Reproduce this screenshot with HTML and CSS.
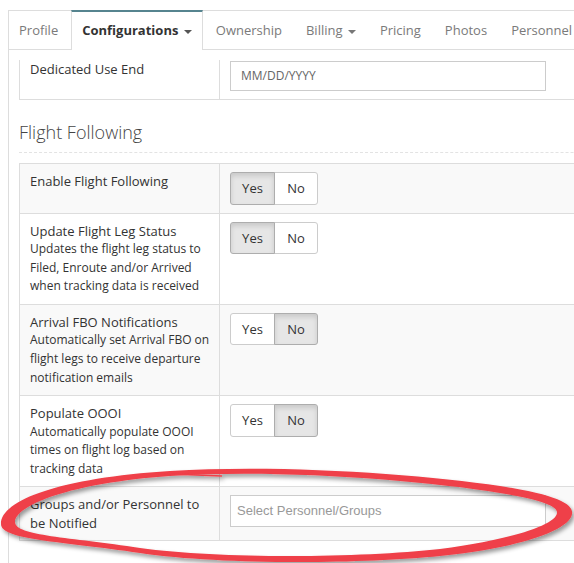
FILE: index.html
```html
<!DOCTYPE html>
<html>
<head>
<meta charset="utf-8">
<link rel="stylesheet" href="styles.css">
</head>
<body>
<div class="panel">
  <ul class="tabs">
    <li class="tab">Profile</li>
    <li class="tab active">Configurations <span class="caret"></span></li>
    <li class="tab">Ownership</li>
    <li class="tab">Billing <span class="caret"></span></li>
    <li class="tab">Pricing</li>
    <li class="tab">Photos</li>
    <li class="tab">Personnel</li>
    <li class="tab">Documents</li>
  </ul>
  <div class="content">
    <div class="ftable cut">
      <div class="frow">
        <div class="lbl">Dedicated Use End</div>
        <div class="val"><div class="field date">MM/DD/YYYY</div></div>
      </div>
    </div>

    <h3 class="section">Flight Following</h3>

    <div class="ftable">
      <div class="frow striped">
        <div class="lbl"><div class="title">Enable Flight Following</div></div>
        <div class="val">
          <div class="btn-group"><span class="btn yes on">Yes</span><span class="btn no">No</span></div>
        </div>
      </div>
      <div class="frow">
        <div class="lbl">
          <div class="title">Update Flight Leg Status</div>
          <div class="desc">Updates the flight leg status to<br>Filed, Enroute and/or Arrived<br>when tracking data is received</div>
        </div>
        <div class="val">
          <div class="btn-group"><span class="btn yes on">Yes</span><span class="btn no">No</span></div>
        </div>
      </div>
      <div class="frow striped">
        <div class="lbl">
          <div class="title">Arrival FBO Notifications</div>
          <div class="desc">Automatically set Arrival FBO on<br>flight legs to receive departure<br>notification emails</div>
        </div>
        <div class="val">
          <div class="btn-group"><span class="btn yes">Yes</span><span class="btn no on">No</span></div>
        </div>
      </div>
      <div class="frow">
        <div class="lbl">
          <div class="title">Populate OOOI</div>
          <div class="desc">Automatically populate OOOI<br>times on flight log based on<br>tracking data</div>
        </div>
        <div class="val">
          <div class="btn-group"><span class="btn yes">Yes</span><span class="btn no on">No</span></div>
        </div>
      </div>
      <div class="frow striped">
        <div class="lbl"><div class="title">Groups and/or Personnel to<br>be Notified</div></div>
        <div class="val"><div class="field select">Select Personnel/Groups</div></div>
      </div>
    </div>
  </div>
</div>

<svg class="annot" width="574" height="563" viewBox="0 0 574 563" xmlns="http://www.w3.org/2000/svg">
  <defs>
    <filter id="sh" x="-5%" y="-20%" width="110%" height="140%">
      <feDropShadow dx="2" dy="3" stdDeviation="2" flood-color="#000" flood-opacity="0.4"/>
    </filter>
  </defs>
  <g filter="url(#sh)">
    <path fill="#ef3f48" fill-rule="evenodd" d="M 1 524 C 1 500 60 478 170 471 C 280 464 420 474 500 486 C 560 495 574 505 572 514 C 570 530 520 548 440 556 C 360 564 220 565 140 553 C 60 541 1 540 1 524 Z M 15 522 C 16 505 70 483 170 476 C 280 469 420 480 500 493 C 545 500 558 507 557 513 C 556 525 510 540 440 549 C 360 558 220 559 140 548 C 70 537 15 536 15 522 Z"/>
    <path d="M 158 473.5 L 222 476" stroke="#ef3f48" stroke-width="1.5" fill="none"/>
  </g>
</svg>
</body>
</html>
```

FILE: styles.css
```css
html, body {
  overflow: hidden;
}
body {
  margin: 10px 0 0 8px;
  background: #fff;
  font-family: "Open Sans", "DejaVu Sans", sans-serif;
  font-size: 13px;
  line-height: 1.42857;
  color: #333;
}
.panel {
  width: 720px;
  min-height: 620px;
  border-left: 1px solid #ddd;
  border-top: 1px solid #ddd;
}
.tabs {
  list-style: none;
  margin: 0 0 0 -1px;
  padding: 0;
  display: flex;
  align-items: flex-start;
  border-bottom: 1px solid #ddd;
  white-space: nowrap;
}
.tab {
  box-sizing: border-box;
  height: 38px;
  line-height: 37px;
  padding: 0 10px;
  margin-right: 2px;
  border: 1px solid transparent;
  border-bottom: 0;
  color: #7a7a7a;
}
.tab.active {
  height: 40px;
  margin-top: -1px;
  margin-bottom: -1px;
  padding-bottom: 1px;
  border-top: 2px solid #56848f;
  border-left: 1px solid #ddd;
  border-right: 1px solid #ddd;
  background: #fff;
  color: #333;
  font-weight: 700;
}
.caret {
  display: inline-block;
  width: 0;
  height: 0;
  margin-left: 2px;
  vertical-align: middle;
  border-top: 4px solid #777;
  border-left: 4px solid transparent;
  border-right: 4px solid transparent;
}
.tab.active .caret {
  border-top-color: #555;
}
.content {
  padding: 10px 0 0 10px;
}
.ftable {
  border-top: 1px solid #ddd;
  border-left: 1px solid #ddd;
}
.ftable.cut {
  border-top: 0;
}
.frow {
  display: grid;
  grid-template-columns: 200px 1fr;
  border-bottom: 1px solid #ddd;
}
.frow.striped {
  background: #f9f9f9;
}
.lbl {
  padding: 8px 10px;
  border-right: 1px solid #ddd;
  white-space: nowrap;
}
.desc {
  font-size: 12px;
  line-height: 18.57px;
}
.val {
  padding: 8px 10px;
}
.cut .lbl {
  padding-top: 0;
}
.cut .val {
  padding-top: 1px;
}
.field {
  box-sizing: border-box;
  width: 316px;
  border: 1px solid #ccc;
  background: #fff;
}
.field.date {
  height: 30px;
  line-height: 28px;
  padding: 0 10px;
  font-size: 12px;
  color: #666;
}
.field.select {
  height: 32px;
  line-height: 30px;
  padding: 0 6px;
  font-family: "Liberation Sans", Arial, sans-serif;
  font-size: 13px;
  color: #999;
}
.section {
  margin: 21px 0 10px;
  padding-bottom: 9px;
  border-bottom: 1px dashed #e3e3e3;
  font-size: 18px;
  line-height: 22px;
  font-weight: 300;
  color: #444;
}
.btn-group {
  display: inline-flex;
}
.btn {
  box-sizing: border-box;
  display: block;
  padding: 6px 0;
  text-align: center;
  border: 1px solid #ccc;
  background: #fff;
  color: #333;
}
.btn.yes {
  width: 45px;
  border-radius: 3px 0 0 3px;
}
.btn.no {
  width: 44px;
  margin-left: -1px;
  border-radius: 0 3px 3px 0;
}
.btn.on {
  background: #e6e6e6;
  border-color: #adadad;
  box-shadow: inset 0 3px 5px rgba(0, 0, 0, 0.125);
  position: relative;
}
.annot {
  position: fixed;
  left: 0;
  top: 0;
  pointer-events: none;
}
```
